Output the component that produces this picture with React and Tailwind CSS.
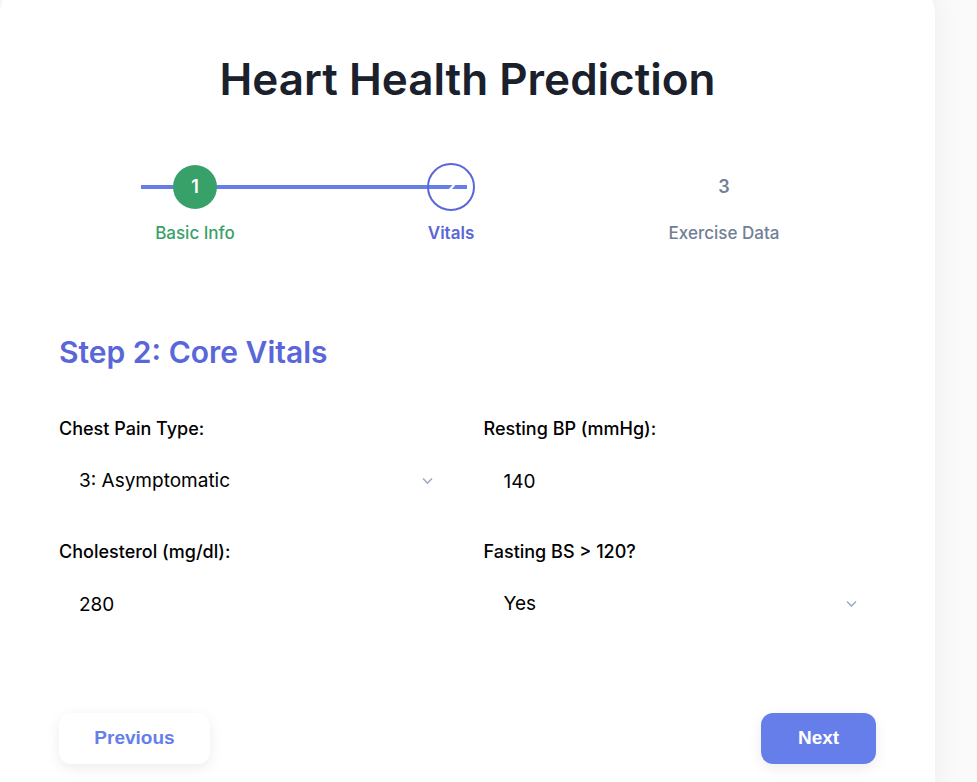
import { useState } from "react"

const font = { fontFamily: "Inter, 'Noto Sans', sans-serif" }

function Chevron() {
  return (
    <svg
      className="pointer-events-none absolute right-[19px] top-1/2 -translate-y-1/2"
      width="11"
      height="7"
      viewBox="0 0 11 7"
      fill="none"
    >
      <path d="M1 1l4.5 4.5L10 1" stroke="#a0aec0" strokeWidth="1.6" />
    </svg>
  )
}

function Field({ label, children }) {
  return (
    <div className="flex flex-col">
      <label className="mb-[15px] text-[18px] leading-[26px] font-medium text-black">
        {label}
      </label>
      <div className="relative h-12">{children}</div>
    </div>
  )
}

export default function App() {
  const [pain, setPain] = useState("3")
  const [fbs, setFbs] = useState("1")

  return (
    <div className="h-screen overflow-hidden bg-[#fafafa]" style={font}>
      <div className="-mt-3 w-[935px] rounded-3xl bg-white px-[59px] pt-[63px] pb-10 shadow-[0_0_28px_rgba(0,0,0,0.06)]">
        <h1 className="text-center text-[44px] leading-[56px] font-semibold text-[#1a202c]">
          Heart Health Prediction
        </h1>

        <div className="relative mt-[56px] grid grid-cols-[272px_240px_306px]">
          <div className="absolute left-[82px] top-[22px] h-1 w-[326px] bg-[#667eea]" />

          <div className="relative flex flex-col items-center">
            <div className="flex h-12 w-12 items-center justify-center">
              <div className="flex h-[44px] w-[44px] items-center justify-center rounded-full bg-[#38a169] text-lg font-semibold text-white">
                1
              </div>
            </div>
            <span className="mt-[10px] text-[17px] leading-6 font-medium text-[#38a169]">
              Basic Info
            </span>
          </div>

          <div className="relative flex flex-col items-center">
            <div className="flex h-12 w-12 items-center justify-center rounded-full border-2 border-[#5a67d8] text-lg font-semibold text-white">
              2
            </div>
            <span className="mt-[10px] text-[17px] leading-6 font-semibold text-[#5a67d8]">
              Vitals
            </span>
          </div>

          <div className="relative flex flex-col items-center">
            <div className="flex h-12 w-12 items-center justify-center rounded-full bg-white text-lg font-semibold text-[#718096]">
              3
            </div>
            <span className="mt-[10px] text-[17px] leading-6 font-medium text-[#718096]">
              Exercise Data
            </span>
          </div>
        </div>

        <h2 className="mt-[89px] text-[30px] leading-9 font-semibold text-[#5a67d8]">
          Step 2: Core Vitals
        </h2>

        <div className="mt-[46px] grid grid-cols-2 gap-x-8 gap-y-[34px]">
          <Field label="Chest Pain Type:">
            <select
              value={pain}
              onChange={(e) => setPain(e.target.value)}
              className="h-full w-full appearance-none bg-transparent px-5 text-[19px] text-black outline-none"
            >
              <option value="0">0: Typical Angina</option>
              <option value="1">1: Atypical Angina</option>
              <option value="2">2: Non-anginal Pain</option>
              <option value="3">3: Asymptomatic</option>
            </select>
            <Chevron />
          </Field>
          <Field label="Resting BP (mmHg):">
            <input
              defaultValue="140"
              className="h-full w-full bg-transparent px-5 text-[19px] text-black outline-none"
            />
          </Field>
          <Field label="Cholesterol (mg/dl):">
            <input
              defaultValue="280"
              className="h-full w-full bg-transparent px-5 text-[19px] text-black outline-none"
            />
          </Field>
          <Field label="Fasting BS > 120?">
            <select
              value={fbs}
              onChange={(e) => setFbs(e.target.value)}
              className="h-full w-full appearance-none bg-transparent px-5 text-[19px] text-black outline-none"
            >
              <option value="0">No</option>
              <option value="1">Yes</option>
            </select>
            <Chevron />
          </Field>
        </div>

        <div
          className="mt-[85px] flex justify-between"
          style={{ fontFamily: "'Liberation Sans', Arial, sans-serif" }}
        >
          <button className="h-[51px] w-[151px] rounded-xl bg-white text-[19px] font-bold text-[#667eea] shadow-[0_4px_14px_rgba(0,0,0,0.08)]">
            Previous
          </button>
          <button className="h-[51px] w-[115px] rounded-xl bg-[#667eea] text-[19px] font-bold text-white shadow-[0_4px_14px_rgba(0,0,0,0.08)]">
            Next
          </button>
        </div>
      </div>
    </div>
  )
}
